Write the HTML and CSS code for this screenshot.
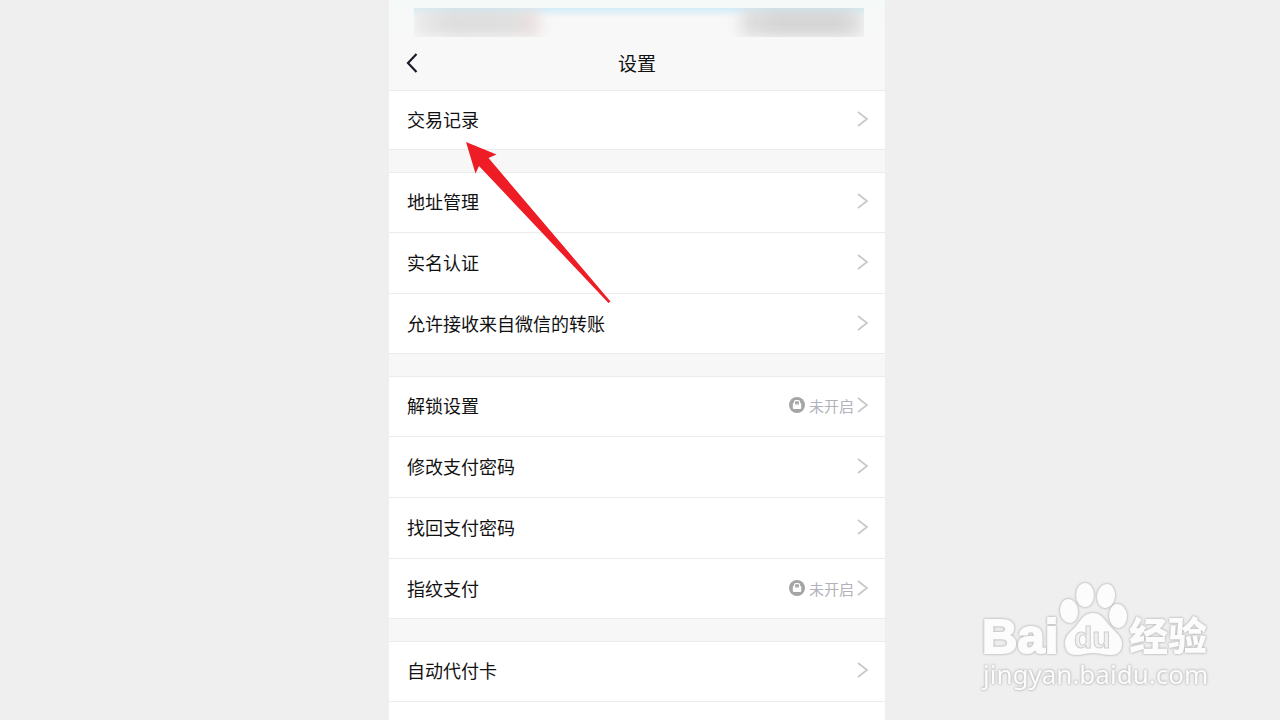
FILE: index.html
```html
<!DOCTYPE html>
<html lang="zh-CN">
<head>
    <meta charset="UTF-8">
    <meta name="viewport" content="width=device-width, initial-scale=1.0">
    <title>设置</title>
    <link rel="stylesheet" href="styles.css">
</head>
<body>

    <!-- Shared icons -->
    <svg class="icon-defs" aria-hidden="true">
        <symbol id="chevron" viewBox="0 0 12 18">
            <path d="M1 2 L10 9 L1 16" fill="none" stroke="#c8c8c8" stroke-width="1.7" />
        </symbol>
        <symbol id="lock" viewBox="0 0 16 16">
            <circle cx="8" cy="8" r="8" fill="#a5a5a5" />
            <path d="M5.4 6.5 V5.3 Q5.4 3.7 7 3.7 H9 Q10.6 3.7 10.6 5.3 V6.5" fill="none" stroke="#fff" stroke-width="1.2" />
            <rect x="3.8" y="6" width="8.4" height="6" rx="1" fill="#fff" />
            <rect x="6" y="6.2" width="4" height="1.3" fill="#a5a5a5" />
        </symbol>
    </svg>

    <main class="phone">
        <header>
            <div class="status-bar">
                <span class="smudge smudge-left"></span>
                <span class="smudge smudge-right"></span>
            </div>
            <div class="title-bar">
                <button class="back" aria-label="返回">
                    <svg width="14" height="22" viewBox="0 0 14 22"><path d="M11.5 2 L3 11 L11.5 20" fill="none" stroke="#1a1a28" stroke-width="2.2" /></svg>
                </button>
                <h1>设置</h1>
            </div>
        </header>

        <ul class="group">
            <li><a href="#">交易记录<svg class="chevron"><use href="#chevron" /></svg></a></li>
        </ul>

        <ul class="group">
            <li><a href="#">地址管理<svg class="chevron"><use href="#chevron" /></svg></a></li>
            <li><a href="#">实名认证<svg class="chevron"><use href="#chevron" /></svg></a></li>
            <li><a href="#">允许接收来自微信的转账<svg class="chevron"><use href="#chevron" /></svg></a></li>
        </ul>

        <ul class="group">
            <li><a href="#">解锁设置<span class="state"><svg class="lock"><use href="#lock" /></svg>未开启</span><svg class="chevron"><use href="#chevron" /></svg></a></li>
            <li><a href="#">修改支付密码<svg class="chevron"><use href="#chevron" /></svg></a></li>
            <li><a href="#">找回支付密码<svg class="chevron"><use href="#chevron" /></svg></a></li>
            <li><a href="#">指纹支付<span class="state"><svg class="lock"><use href="#lock" /></svg>未开启</span><svg class="chevron"><use href="#chevron" /></svg></a></li>
        </ul>

        <ul class="group group-last">
            <li><a href="#">自动代付卡<svg class="chevron"><use href="#chevron" /></svg></a></li>
            <li></li>
        </ul>

        <svg class="arrow" viewBox="0 0 146 162" aria-hidden="true">
            <path d="M0 0 L30.500 12.500 L22.500 16 L144.500 159.500 L142.500 161 L13 24 L9.500 31.500 Z" fill="#ee1c25" />
        </svg>
    </main>

    <svg class="watermark" viewBox="0 0 240 120" role="img" aria-label="Baidu经验">
        <g class="ink">
            <text class="brand" x="2" y="77">Bai</text>
            <ellipse cx="89" cy="35" rx="9" ry="12" transform="rotate(-6 89 35)" />
            <ellipse cx="105" cy="19" rx="9" ry="12" />
            <ellipse cx="126" cy="20" rx="9" ry="12" transform="rotate(8 126 20)" />
            <ellipse cx="138" cy="40" rx="9" ry="12" transform="rotate(-4 138 40)" />
            <path d="M113 37 C121 37 124 43 129 49 C135 56 142 60 142 68 C142 76 137 79 131 79 C124 79 119 77 113 77 C107 77 102 79 96 79 C89 79 85 75 85 67 C85 59 92 55 97 49 C102 42 105 37 113 37 Z" />
            <text class="exp" x="149" y="74">经验</text>
            <text class="site" x="3" y="108">jingyan.baidu.com</text>
        </g>
        <text class="du" x="94" y="72">du</text>
    </svg>

</body>
</html>
```
FILE: styles.css
```css
* {
    box-sizing: border-box;
}
body {
    margin: 0;
    min-height: 100vh;
    display: grid;
    grid-template-columns: 389fr 496fr 395fr;
    background-color: #efefef;
    font-family: "Noto Sans CJK SC", sans-serif;
    color: #111;
}
.icon-defs {
    position: absolute;
    width: 0;
    height: 0;
}
.phone {
    grid-column: 2;
    position: relative;
    display: flex;
    flex-direction: column;
    gap: 22px;
    background-color: #f7f7f7;
}
header {
    height: 90px;
    margin-bottom: -22px;
    padding-top: 8px;
    background: linear-gradient(#f5f9f8, #f8f8f8 40px);
}
.status-bar {
    display: flex;
    justify-content: space-between;
    height: 29px;
    margin: 0 21px 0 25px;
    overflow: hidden;
    background: linear-gradient(#d2edf7, #f8f8f8 10px);
}
.smudge {
    height: 29px;
    filter: blur(7px);
    opacity: 0.8;
}
.smudge-left {
    width: 126px;
    background: linear-gradient(90deg, #e8e8e8, #d6d6d6 30%, #d8d8d8 75%, #eadbd9);
}
.smudge-right {
    width: 124px;
    background: linear-gradient(90deg, #dcdcdc, #cccccc 30%, #cccccc 80%, #dedede);
}
.title-bar {
    display: grid;
    grid-template-columns: 44px 1fr 44px;
    align-items: center;
    height: 51px;
}
.back {
    display: flex;
    padding: 0 0 0 16px;
    border: none;
    background: none;
    cursor: pointer;
}
h1 {
    margin: 0;
    font-size: 19px;
    font-weight: 400;
    text-align: center;
}
.group {
    margin: 0;
    padding: 0;
    list-style: none;
    background-color: #fff;
    box-shadow: inset 0 1px #ebebeb, inset 0 -1px #ebebeb;
}
.group-last {
    flex: 1;
    box-shadow: inset 0 1px #ebebeb;
}
li + li {
    border-top: 1px solid #ebebeb;
}
.group a {
    display: flex;
    align-items: center;
    height: 60px;
    padding: 0 16px 2px 18px;
    font-size: 18px;
    color: inherit;
    text-decoration: none;
}
.chevron {
    width: 12px;
    height: 18px;
    margin-left: auto;
}
.state {
    display: flex;
    align-items: center;
    gap: 4px;
    margin-left: auto;
    font-size: 15px;
    color: #b2b2ba;
}
.state + .chevron {
    margin-left: 3px;
}
.lock {
    width: 16px;
    height: 16px;
}
.arrow {
    position: absolute;
    left: 77px;
    top: 142px;
    width: 146px;
    height: 162px;
    pointer-events: none;
}
.watermark {
    position: fixed;
    right: 60px;
    bottom: 24px;
    width: 240px;
    height: 120px;
}
.ink {
    fill: #fcfcfc;
    filter: drop-shadow(0 0 1px #b4b4b4) drop-shadow(0 0 1px #d0d0d0);
}
.brand {
    font: 700 49px "Liberation Sans", sans-serif;
    stroke: #fcfcfc;
    stroke-width: 2px;
}
.exp {
    font: 900 39px "Noto Sans CJK SC", sans-serif;
}
.site {
    font: 400 26px "Noto Sans", sans-serif;
}
.du {
    font: 700 30px "Liberation Sans", sans-serif;
    fill: #f0f0f0;
    stroke: #cfcfcf;
    stroke-width: 1px;
}
```
